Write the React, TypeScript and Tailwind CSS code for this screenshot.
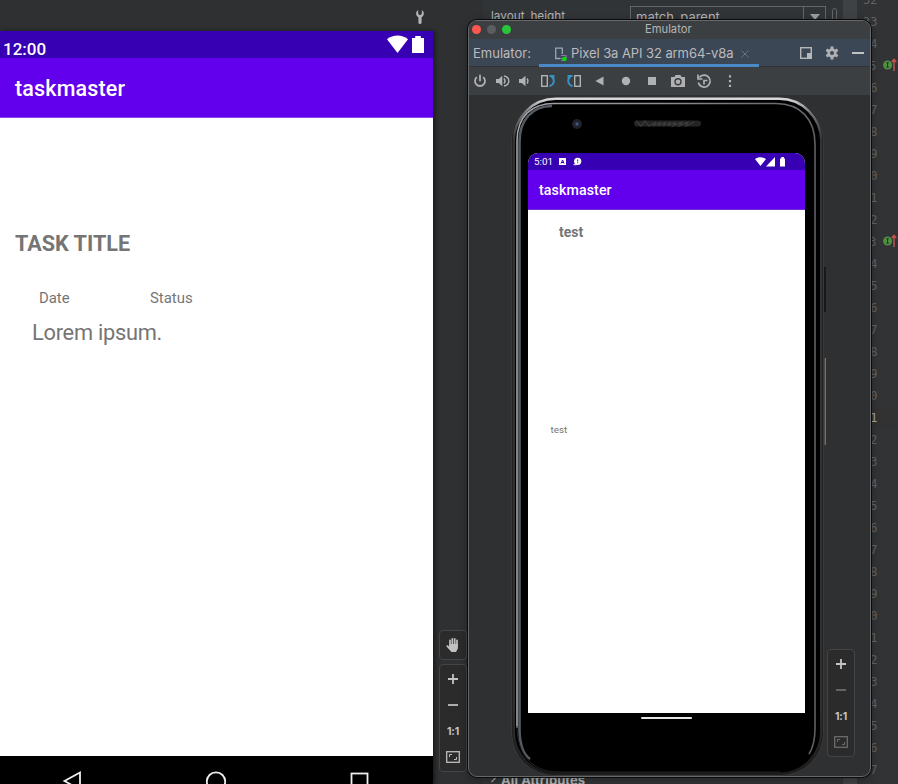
import type { ReactNode } from "react";

const roboto = "font-[Roboto,'Liberation_Sans',sans-serif]";
const inter = "font-[Inter,'Liberation_Sans',sans-serif]";

const lineNumbers = [
  "32", "33", "4", "5", "6", "7", "8", "9", "0", "1", "2", "3", "4", "5", "6", "7", "8", "9",
  "0", "1", "2", "3", "4", "5", "6", "7", "8", "9", "0", "1", "2", "3", "4", "5", "6", "7",
];

function Icon({ children, size = 16 }: { children: ReactNode; size?: number }) {
  return (
    <svg width={size} height={size} viewBox="0 0 16 16" fill="none" className="block shrink-0">
      {children}
    </svg>
  );
}

function ZoomControls({ dim = false }: { dim?: boolean }) {
  const faded = dim ? "#6b6b6c" : "#bdbdbd";
  return (
    <div className="flex h-[108px] w-[28px] flex-col items-center justify-around rounded-[4px] border border-[#434445] bg-[#2b2b2b] py-[1px]">
      <Icon><path d="M8 3v10M3 8h10" stroke="#c4c4c4" strokeWidth="1.8" /></Icon>
      <Icon><path d="M3 8h10" stroke={faded} strokeWidth="1.8" /></Icon>
      <span className={`${inter} h-4 text-[10.5px] font-bold leading-[18px] tracking-[-0.2px] text-[#c4c4c4]`}>1:1</span>
      <Icon>
        <rect x="1.7" y="2.7" width="12.6" height="10.6" stroke={faded} strokeWidth="1.3" />
        <path d="M4.5 8V5.5H7M11.5 8v2.5H9" stroke={faded} />
      </Icon>
    </div>
  );
}

function Override() {
  return (
    <svg width="15" height="16" viewBox="0 0 15 16" className="block">
      <circle cx="4.6" cy="8" r="4.5" fill="#4f9140" />
      <path d="M3.3 5.8h2.6M4.6 5.8v4.4M3.3 10.2h2.6" stroke="#26351f" fill="none" />
      <path d="M11 14V3M8.8 5L11 2.3 13.2 5" stroke="#c75450" strokeWidth="1.4" fill="none" />
    </svg>
  );
}

function Preview() {
  return (
    <div className={`${roboto} flex h-[753px] w-[433px] shrink-0 flex-col bg-white shadow-[2px_0_4px_#1a1a1a]`}>
      <div className="flex h-[27px] shrink-0 items-center bg-[#3700b3] pl-[3px] pr-[8px] text-white">
        <span className="pt-[9px] text-[17px] font-medium leading-5">12:00</span>
        <svg className="ml-auto mt-[1px]" width="38" height="20" viewBox="0 0 38 20" fill="#fff">
          <path d="M0 4.2C6-.7 15-.7 21 4.2L10.5 18Z" />
          <path d="M25 3h3.2V1h5.6v2H37v15H25Z" />
        </svg>
      </div>
      <div className="flex h-[60px] shrink-0 items-center border-b border-[#8b45f0] bg-[#6200ee] pl-[15px] text-[21.5px] font-medium tracking-[0.15px] text-white">
        <span className="pt-[4px]">taskmaster</span>
      </div>
      <div className="flex grow flex-col text-[#757575]">
        <h1 className="mt-[113px] pl-[15px] text-[21.6px] font-bold leading-[26px]">TASK TITLE</h1>
        <div className="mt-[32px] flex text-[14.9px] leading-[18px]">
          <span className="ml-[39px] w-[111px]">Date</span>
          <span>Status</span>
        </div>
        <p className="mt-[13px] pl-[32px] text-[21.8px] leading-[26px] tracking-[-0.25px]">Lorem ipsum.</p>
      </div>
      <div className="h-[28px] shrink-0 bg-black">
        <svg width="433" height="28" viewBox="0 0 433 28" fill="none" stroke="#eee" strokeWidth="1.8">
          <path d="M80 16.5v17L64.5 25Z" />
          <circle cx="216" cy="25.5" r="9.2" />
          <rect x="351.5" y="17.5" width="16" height="16" />
        </svg>
      </div>
    </div>
  );
}

function PhoneFrame() {
  return (
    <svg className="absolute left-0 top-0" width="318" height="680" viewBox="0 0 318 680" fill="none">
      <defs>
        <linearGradient id="rim" x1="0" y1="0" x2="0" y2="1">
          <stop offset="0" stopColor="#d8d8da" />
          <stop offset=".02" stopColor="#77787c" />
          <stop offset=".06" stopColor="#353536" />
          <stop offset=".9" stopColor="#303030" />
          <stop offset="1" stopColor="#1d1d1d" />
        </linearGradient>
        <linearGradient id="edge" x1="0" y1="0" x2="1" y2="0">
          <stop offset="0" stopColor="#a5a6aa" />
          <stop offset=".5" stopColor="#8b8c90" />
          <stop offset="1" stopColor="#606066" />
        </linearGradient>
      </defs>
      <rect x="1.5" y="1.5" width="312" height="678" rx="43" fill="#191919" stroke="#39393a" />
      <rect x="3.8" y="2.8" width="307.4" height="675" rx="42" fill="#000" stroke="url(#rim)" strokeWidth="2.4" />
      <path d="M7 632V45C7 20 22 7.500 44 7.500H266C290 7.500 305 23 305 48V632C305 644 303 652 299 658" stroke="url(#edge)" strokeWidth="1.600" />
      <path d="M9.500 635V46C9.500 24 22 10 42 10M9.500 635C10 650 14 659 20 663" stroke="#555b63" strokeWidth="2.600" />
      <path d="M7 630C7 656 20 674 45 676H270" stroke="#252525" />
      <path d="M315 171V216" stroke="#17191a" strokeWidth="2" />
      <path d="M315.300 262V349" stroke="#777773" strokeWidth="1.300" />
      <circle cx="67" cy="28" r="5" fill="#202124" />
      <circle cx="67" cy="28" r="2.600" fill="#273252" />
      <circle cx="67" cy="28" r="1" fill="#58698e" />
      <rect x="124" y="24.500" width="67" height="6" rx="3" fill="#242424" />
      <path d="M126 25l5 5 4-5 4 5 7-4-3 4 8-4-3 4 8-4-3 4 8-4-3 4 8-4-3 4 9-4-3 4 9-4-2 4 8-4" stroke="#3c3c3c" strokeWidth="1.200" />
    </svg>
  );
}

function Phone() {
  return (
    <div className={`${roboto} relative ml-[41px] h-[680px] w-[317px] shrink-0 pl-[18px] pt-[57px]`}>
      <PhoneFrame />
      <div className="relative flex h-[560px] w-[277px] flex-col overflow-hidden rounded-t-[10px] bg-white">
        <div className="flex h-[17px] items-center bg-[#3700b3] pl-[6px] pr-[18px] text-white">
          <span className="text-[9.800px] leading-[17px]">5:01</span>
          <svg className="ml-[5px]" width="26" height="9" viewBox="0 0 26 9">
            <rect x="1" y="1" width="7" height="7" rx=".6" fill="#fff" />
            <path d="M3 6.500L4.600 3 6 6.500M3.600 5.500h2" stroke="#3700b3" fill="none" />
            <circle cx="19.700" cy="4.300" r="3.600" fill="#fff" />
            <path d="M15.500 7.700h3" stroke="#fff" />
            <path d="M19.700 2.500v2M19.700 5.300v1" stroke="#3700b3" />
          </svg>
          <svg className="ml-auto" width="32" height="10" viewBox="0 0 32 10" fill="#fff">
            <path d="M0 2C3-.3 8-.3 11 2L5.500 9Z" />
            <path d="M20 0v9.500h-9Z" />
            <path d="M25 1.500h1.300V0h2.600v1.500H30v8h-5Z" />
          </svg>
        </div>
        <div className="flex h-[40px] items-center border-b border-[#6e30d9] bg-[#6200ee] pl-[11px] text-[14.200px] font-medium tracking-[0.100px] text-white">
          <span className="pt-[3px]">taskmaster</span>
        </div>
        <div className="flex grow flex-col text-[#757575]">
          <span className="ml-[31px] mt-[13px] text-[14px] font-bold leading-[18px]">test</span>
          <span className="ml-[22.500px] mt-[183px] text-[9.800px] leading-[12px]">test</span>
        </div>
      </div>
      <div className="relative ml-[113px] mt-[4px] h-[2px] w-[51px] rounded-full bg-[#e4e6e8]" />
    </div>
  );
}

function Toolbar() {
  return (
    <div className="h-[28px] shrink-0 bg-[#3c3f41]">
      <svg width="401" height="28" viewBox="469 67 401 28" fill="none" stroke="#afb1b3" strokeWidth="1.800">
        <path d="M476.900 77.100a5 5 0 1 0 6.200 0M480 74.800v6.400" />
        <path d="M496 79v4h2.700l3.600 3.300V75.700L498.700 79Z" fill="#afb1b3" stroke="none" />
        <path d="M504 78.500q2 2.500 0 5M504 76q4.800 1 4.800 5t-4.800 5" strokeWidth="1.400" />
        <path d="M519 79v4h2.700l3.800 3.300V75.700L521.700 79Z" fill="#afb1b3" stroke="none" />
        <path d="M527 78.500q2 2.500 0 5" strokeWidth="1.300" />
        <rect x="541.700" y="75.700" width="5.600" height="10.600" strokeWidth="1.400" />
        <path d="M549.500 86.300c5.500-2.500 5.500-6.500 2-10M549.500 76h4v4" stroke="#3592c4" strokeWidth="1.900" />
        <rect x="574.700" y="75.700" width="5.600" height="10.600" strokeWidth="1.400" />
        <path d="M572.500 86.300c-5.500-2.500-5.500-6.500-2-10M572.500 76h-4v4" stroke="#3592c4" strokeWidth="1.900" />
        <path d="M595.500 81l8-4.500v9Z" fill="#afb1b3" stroke="none" />
        <circle cx="626" cy="81" r="4.200" fill="#afb1b3" stroke="none" />
        <rect x="648" y="77" width="8" height="8" fill="#afb1b3" stroke="none" />
        <path d="M671 77h3.500l1-2h5l1 2h3.500v10h-14Z" fill="#afb1b3" stroke="none" />
        <circle cx="678" cy="81.800" r="3" stroke="#3c3f41" strokeWidth="1.400" />
        <path d="M699.300 77.500a6 6 0 1 1-1 5M698 74.500v4.500h4.500M704 84.500v-4h3.500" strokeWidth="1.700" />
        <path d="M730 75.200v2.200M730 80v2.200M730 84.800v2.200" strokeWidth="2.200" />
      </svg>
    </div>
  );
}

function EmulatorWindow() {
  return (
    <div className={`${inter} absolute left-[468px] top-[20px] flex h-[757px] w-[403px] flex-col overflow-hidden rounded-[9px] border border-[#66686a] bg-[#2f3032] shadow-[0_0_0_1px_#0b0b0b,0_2px_9px_#0005]`}>
      <div className="flex h-[18px] shrink-0 items-center bg-[#3c3f41] pl-[3px]">
        <span className="-mt-[1px] size-[9px] rounded-full bg-[#ff5650]" />
        <span className="-mt-[1px] ml-[6px] size-[9px] rounded-full bg-[#5c5d5e]" />
        <span className="-mt-[1px] ml-[6px] size-[9px] rounded-full bg-[#28c639]" />
        <span className="-mt-[2px] ml-[134px] text-[11.200px] leading-4 text-[#b4b5b6]">Emulator</span>
      </div>
      <div className="flex h-[28px] shrink-0 items-stretch border-b border-[#323232] bg-[#3c4756] text-[13px] text-[#bbbbbb]">
        <span className="w-[70px] pl-[4px] leading-[29px]">Emulator:</span>
        <div className="-mb-[1px] flex w-[220px] items-center border-b-[3px] border-[#4a88c7] pl-[14px]">
          <svg width="15" height="16" viewBox="0 0 15 16" fill="none" className="mt-[4px]">
            <path d="M7 12.500H2.700V2.200h6.600V8" stroke="#9aa7b0" strokeWidth="1.300" />
            <path d="M8 9.500h5v3M7 12.500h3M8 14.500h2" stroke="#9270b8" strokeWidth="1.200" />
            <circle cx="11.500" cy="13" r="2.300" fill="#00e000" />
          </svg>
          <span className="ml-[3px] mt-[4px] whitespace-nowrap tracking-[-0.080px]">Pixel 3a API 32 arm64-v8a</span>
          <svg className="ml-[7px] mt-[4px]" width="8" height="8" viewBox="0 0 8 8"><path d="M.5.500l7 7m0-7l-7 7" stroke="#68727c" /></svg>
        </div>
        <svg className="ml-auto" width="70" height="27" viewBox="800 39 70 27" fill="none">
          <rect x="800.700" y="47.700" width="10.600" height="10.600" stroke="#b5b7b9" strokeWidth="1.400" />
          <rect x="807" y="53" width="4" height="5" fill="#b5b7b9" />
          <path d="M832 46.500v13M826.400 49.750l11.200 6.500M826.400 56.250l11.200-6.500" stroke="#afb1b3" strokeWidth="3" />
          <circle cx="832" cy="53" r="3.300" stroke="#afb1b3" strokeWidth="2.600" fill="#3c4756" />
          <path d="M852 53h12" stroke="#c0c2c4" strokeWidth="2" />
        </svg>
      </div>
      <Toolbar />
      <div className="flex items-start pt-[1px]">
        <Phone />
        <div className="mt-[553px]"><ZoomControls dim /></div>
      </div>
    </div>
  );
}

export default function App() {
  return (
    <div className="relative flex h-[784px] w-[898px] overflow-hidden bg-[#2f3032]">
      <div className="flex w-[483px] shrink-0 flex-col">
        <div className="flex h-[31px] shrink-0 items-center pl-[412px] pt-[3px]">
          <Icon>
            <path d="M6.200 1.200C3.600 2.200 3.200 6.300 6.400 8.200V13.400a1.600 1.600 0 0 0 3.200 0V8.200C12.800 6.300 12.400 2.200 9.800 1.200V5L8 6.300 6.200 5Z" fill="#b2b3b4" />
          </Icon>
        </div>
        <div className="flex">
          <Preview />
          <div className="ml-[6px] mt-[599px] flex flex-col gap-[4px]">
            <div className="flex h-[30px] w-[28px] items-center justify-center rounded-[4px] border border-[#434445] bg-[#2b2b2b]">
              <Icon>
                <path d="M5 8V3.300M7.300 7V1.800M9.700 7V1.800M12 8V3.300" stroke="#c2c2c2" strokeWidth="1.700" strokeLinecap="round" />
                <path d="M4.200 7h8.700v4.500L11 15H6.500L1.500 9.500q-.8-1.500 1-1.300l1.700 1.300Z" fill="#c2c2c2" />
              </Icon>
            </div>
            <ZoomControls />
          </div>
        </div>
      </div>
      <div className={`${inter} flex w-[360px] shrink-0 flex-col justify-between bg-[#313436] text-[#b0b1b2]`}>
        <div className="flex items-start pl-[8px] pt-[6px]">
          <span className="w-[139px] pt-[1px] text-[11.800px] leading-[18px]">layout_height</span>
          <div className="flex h-[22px] w-[196px] justify-between border border-[#626465] pl-[5px] text-[13px] leading-[20px]">
            <span>match_parent</span>
            <span className="flex w-[22px] items-center justify-center border-l border-[#626465]">
              <svg width="10" height="6" viewBox="0 0 10 6"><path d="M0 0h10L5 6Z" fill="#9a9c9e" /></svg>
            </span>
          </div>
          <div className="ml-[6px] mt-[2px] h-[22px] w-[5px] rounded-full border border-[#626465]" />
        </div>
        <div className="flex h-[12px] items-center pl-[7px] text-[13px] font-bold">
          <svg width="7" height="9" viewBox="0 0 7 9"><path d="M1.500 1l3.500 3.500L1.500 8" fill="none" stroke="#9a9c9e" strokeWidth="1.400" /></svg>
          <span className="ml-[4px] pt-[3px] leading-[14px] tracking-[0.080px]">All Attributes</span>
        </div>
      </div>
      <div className="w-[14px] shrink-0 bg-[#3f4244]" />
      <div className="flex w-[41px] shrink-0 flex-col bg-[#313335]">
        <div className="-mt-[12px] flex flex-col">
          {lineNumbers.map((n, i) => (
            <div
              key={i}
              className={`flex h-[22px] shrink-0 items-center font-['DejaVu_Sans_Mono',monospace] text-[12px] ${i === 19 ? "bg-[#323232] text-[#a4a3a3]" : "text-[#606366]"}`}
            >
              <span className="w-[20.500px] pt-[1px] text-right">{n}</span>
              {(i === 3 || i === 11) && <span className="ml-[6.500px] -mt-[1px]"><Override /></span>}
            </div>
          ))}
        </div>
      </div>
      <EmulatorWindow />
    </div>
  );
}
